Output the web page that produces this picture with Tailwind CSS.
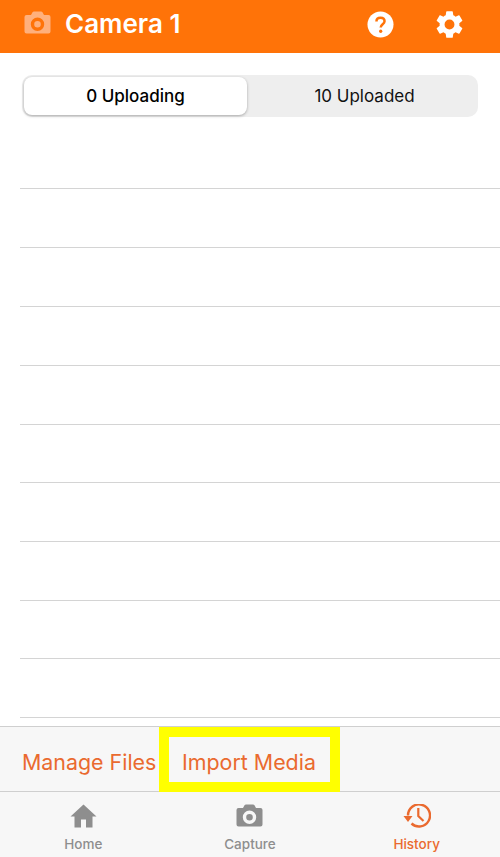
<!DOCTYPE html>
<html lang="en">
<head>
    <meta charset="UTF-8">
    <meta name="viewport" content="width=device-width, initial-scale=1.0">
    <title>Camera 1</title>
    <script src="https://cdn.jsdelivr.net/npm/@tailwindcss/browser@4"></script>
</head>
<body class="bg-white font-['Inter',sans-serif]">
    <div class="flex h-[857px] w-[500px] flex-col overflow-hidden">
        <!-- header -->
        <header class="flex h-[53px] shrink-0 items-center bg-[#ff7308] pb-[5px] pl-[24px] text-white">
            <svg class="mb-[3px] h-[23px] w-[27px] text-[#ffb07c]" viewBox="0 0 27 23" fill="currentColor">
                <path fill-rule="evenodd" d="M2.5 4H7L8.5 1.3Q9 .5 10 .5H17Q18 .5 18.5 1.3L20 4H24.5Q26.5 4 26.5 6V20.5Q26.5 22.5 24.5 22.5H2.5Q.5 22.5 .5 20.5V6Q.5 4 2.5 4ZM13.5 6.55A6.7 6.7 0 1 0 13.5 19.95A6.7 6.7 0 1 0 13.5 6.55ZM13.5 9.95A3.3 3.3 0 1 1 13.5 16.55A3.3 3.3 0 1 1 13.5 9.95Z"/>
            </svg>
            <h1 class="ml-[14px] text-[26px] font-semibold leading-none">Camera 1</h1>
            <div class="ml-auto mr-[34px] flex items-center gap-[39px]">
                <svg class="h-[27px] w-[27px]" viewBox="0 0 28 28">
                    <circle cx="14" cy="14" r="13.5" fill="#fff"/>
                    <path d="M9.8 10.8C9.8 8.4 11.6 7 14 7C16.4 7 18.2 8.4 18.2 10.6C18.2 13.6 14.2 13.8 14.2 17" fill="none" stroke="#ff7308" stroke-width="2.6"/>
                    <circle cx="14.2" cy="21" r="1.7" fill="#ff7308"/>
                </svg>
                <svg class="h-[33px] w-[33px]" viewBox="0 0 24 24" fill="#fff">
                    <path d="M19.14 12.94c.04-.3.06-.61.06-.94 0-.32-.02-.64-.07-.94l2.03-1.58a.49.49 0 0 0 .12-.61l-1.92-3.32a.488.488 0 0 0-.59-.22l-2.39.96c-.5-.38-1.03-.7-1.62-.94l-.36-2.54a.484.484 0 0 0-.48-.41h-3.84c-.24 0-.43.17-.47.41l-.36 2.54c-.59.24-1.13.57-1.62.94l-2.39-.96c-.22-.08-.47 0-.59.22L2.74 8.87c-.12.21-.08.47.12.61l2.03 1.58c-.05.3-.09.63-.09.94s.02.64.07.94l-2.03 1.58a.49.49 0 0 0-.12.61l1.92 3.32c.12.22.37.29.59.22l2.39-.96c.5.38 1.03.7 1.62.94l.36 2.54c.05.24.24.41.48.41h3.84c.24 0 .44-.17.47-.41l.36-2.54c.59-.24 1.13-.56 1.62-.94l2.39.96c.22.08.47 0 .59-.22l1.92-3.32c.12-.22.07-.47-.12-.61l-2.01-1.58zM12 15.6A3.6 3.6 0 1 1 12 8.4a3.6 3.6 0 0 1 0 7.2z"/>
                </svg>
            </div>
        </header>

        <!-- segmented control -->
        <div class="mx-[22px] mt-[22px] flex h-[42px] shrink-0 rounded-[10px] bg-[#eeeeee] p-[2px]">
            <div class="flex w-[223px] items-center justify-center rounded-[8px] bg-white pt-[2px] text-[17px] font-medium text-black shadow-[0_1px_3px_rgba(0,0,0,0.3)]">0 Uploading</div>
            <div class="flex flex-1 items-center justify-center pl-[6px] pt-[2px] text-[17px] text-[#111111]">10 Uploaded</div>
        </div>

        <!-- rows -->
        <div class="ml-[20px] mt-[13px] flex min-h-0 flex-1 flex-col">
            <div class="h-[59px] shrink-0 border-b border-[#d4d4d4]"></div>
            <div class="h-[59px] shrink-0 border-b border-[#d4d4d4]"></div>
            <div class="h-[59px] shrink-0 border-b border-[#d4d4d4]"></div>
            <div class="h-[59px] shrink-0 border-b border-[#d4d4d4]"></div>
            <div class="h-[59px] shrink-0 border-b border-[#d4d4d4]"></div>
            <div class="h-[58px] shrink-0 border-b border-[#d4d4d4]"></div>
            <div class="h-[59px] shrink-0 border-b border-[#d4d4d4]"></div>
            <div class="h-[59px] shrink-0 border-b border-[#d4d4d4]"></div>
            <div class="h-[58px] shrink-0 border-b border-[#d4d4d4]"></div>
            <div class="h-[59px] shrink-0 border-b border-[#d4d4d4]"></div>
        </div>

        <!-- actions -->
        <div class="flex h-[66px] shrink-0 items-stretch border-y border-[#cfcfcf] bg-[#f7f7f7] text-[21.4px] text-[#ea6a2f]">
            <div class="flex w-[159px] items-center whitespace-nowrap pl-[22px] pt-[6px]">Manage Files</div>
            <div class="-mb-px flex w-[181px] items-center whitespace-nowrap border-[10px] border-[#ffff00] pl-[13px] pt-[6px]">Import Media</div>
        </div>

        <!-- tabs -->
        <nav class="grid h-[65px] shrink-0 grid-cols-3 bg-[#f7f7f7] text-[13.5px] font-medium text-[#8e8e8e]">
            <div class="flex flex-col items-center pt-[12px]">
                <svg class="h-[24px] w-[27px]" viewBox="0 0 27 24" fill="#8e8e8e">
                    <path d="M13.5 .5L26.5 12.5H22.5V23.5H16V15.5H11V23.5H4.5V12.5H.5Z"/>
                </svg>
                <span class="mt-[6px]">Home</span>
            </div>
            <div class="flex flex-col items-center pt-[12px]">
                <svg class="h-[23px] w-[27px]" viewBox="0 0 27 23" fill="#8e8e8e">
                    <path fill-rule="evenodd" d="M2.5 4H7L8.5 1.3Q9 .5 10 .5H17Q18 .5 18.5 1.3L20 4H24.5Q26.5 4 26.5 6V20.5Q26.5 22.5 24.5 22.5H2.5Q.5 22.5 .5 20.5V6Q.5 4 2.5 4ZM13.5 6.55A6.7 6.7 0 1 0 13.5 19.95A6.7 6.7 0 1 0 13.5 6.55ZM13.5 9.95A3.3 3.3 0 1 1 13.5 16.55A3.3 3.3 0 1 1 13.5 9.95Z"/>
                </svg>
                <span class="mt-[7px]">Capture</span>
            </div>
            <div class="flex flex-col items-center pt-[12px] text-[#ea6a2f]">
                <svg class="h-[25px] w-[28px]" viewBox="0 0 28 25" fill="none" stroke="#ea6a2f">
                    <path d="M5 11.5A11 11 0 1 1 8.5 19.5" stroke-width="2.4"/>
                    <path d="M.5 12H9.5L5 18Z" fill="#ea6a2f" stroke="none"/>
                    <path d="M15.3 4V12L20.5 17" stroke-width="2.2"/>
                </svg>
                <span class="mt-[5px]">History</span>
            </div>
        </nav>
    </div>
</body>
</html>
